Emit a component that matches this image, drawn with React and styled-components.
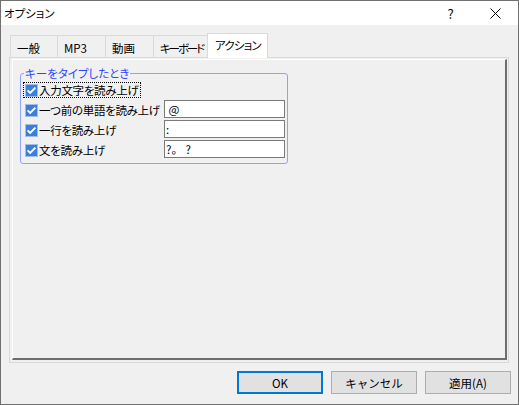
import styled, { createGlobalStyle } from "styled-components";

const GlobalStyle = createGlobalStyle`
  html, body {
    margin: 0;
    padding: 0;
    background: #ffffff;
  }
  body {
    font-family: "Noto Sans CJK JP", "Noto Sans", sans-serif;
    font-size: 11.5px;
    font-feature-settings: "palt";
    color: #000;
  }
  * {
    box-sizing: border-box;
  }
`;

const Window = styled.div`
  width: 519px;
  height: 405px;
  border: 1px solid #707070;
  display: flex;
  flex-direction: column;
  background: #f0f0f0;
`;

const TitleBar = styled.div`
  height: 24px;
  background: #ffffff;
  display: flex;
  align-items: center;
  padding-left: 3px;
  .title {
    flex: 1;
    line-height: 24px;
  }
`;

const CaptionButton = styled.div`
  width: 46px;
  height: 24px;
  display: flex;
  align-items: center;
  justify-content: center;
  font-size: 13px;
  padding-left: ${(p) => (p.$help ? 3 : 0)}px;
`;

const Body = styled.div`
  flex: 1;
  display: flex;
  flex-direction: column;
  padding: 8px 9px 10px 8px;
`;

const TabStrip = styled.div`
  height: 25px;
  display: flex;
  align-items: flex-end;
  padding-left: 1px;
  margin-bottom: -1px;
  position: relative;
  z-index: 1;
`;

const Tab = styled.div`
  width: ${(p) => p.$w}px;
  height: ${(p) => (p.$active ? 25 : 23)}px;
  margin-left: ${(p) => (p.$first ? 0 : -1)}px;
  border: 1px solid #d9d9d9;
  border-bottom: none;
  background: ${(p) => (p.$active ? "#ffffff" : "transparent")};
  padding: ${(p) => (p.$active ? "3px 0 0 7px" : "4px 0 0 6px")};
  line-height: 16px;
  letter-spacing: ${(p) => p.$ls || 0}px;
  white-space: nowrap;
  overflow: hidden;
`;

const Panel = styled.div`
  flex: 1;
  border: 1px solid #d9d9d9;
  padding: 1px 1px 2px 2px;
  display: flex;
`;

const Page = styled.div`
  flex: 1;
  border-top: 1px solid #ffffff;
  border-left: 1px solid #ffffff;
  border-right: 2px solid #6d6d6d;
  border-bottom: 2px solid #6d6d6d;
  background: #f0f0f0;
`;

const Group = styled.fieldset`
  width: 268px;
  margin: 6px 0 0 7px;
  padding: 0 2px 3px 2px;
  border: 1px solid #8da3f8;
  border-radius: 3px;
  display: grid;
  grid-template-columns: 141px 121px;
  grid-auto-rows: 20px;
  legend {
    margin-left: 1px;
    padding: 0 1px;
    line-height: 14px;
    color: #2a47ff;
  }
`;

const CheckLabel = styled.label`
  grid-column: 1;
  justify-self: start;
  align-self: center;
  height: 16px;
  display: inline-flex;
  align-items: center;
  gap: 1px;
  padding: 0 1px;
  border: 1px dotted ${(p) => (p.$focused ? "#000" : "transparent")};
  letter-spacing: -0.3px;
  white-space: nowrap;
`;

const TextBox = styled.input`
  grid-column: 2;
  align-self: start;
  width: 121px;
  height: 18px;
  margin: 0;
  border: 1px solid #7a7a7a;
  background: #ffffff;
  padding: 0 1px;
  font-family: inherit;
  font-size: 11.5px;
  font-feature-settings: normal;
  color: #000;
  outline: none;
`;

const ButtonRow = styled.div`
  display: flex;
  justify-content: flex-end;
  gap: 8px;
  margin-top: 8px;
  margin-right: -2px;
`;

const Button = styled.button`
  width: 86px;
  height: 23px;
  margin: 0;
  background: #e1e1e1;
  border: ${(p) => (p.$default ? "2px solid #0078d7" : "1px solid #adadad")};
  font-family: inherit;
  font-size: 11.5px;
  color: #000;
  padding: 0;
`;

const CheckIcon = () => (
  <svg width="13" height="13" viewBox="0 0 13 13">
    <rect x="0.5" y="0.5" width="12" height="12" fill="#3c7fda" stroke="#a3bde4" />
    <path d="M2.6 6.4 L5.2 9 L10.4 3.6" fill="none" stroke="#ffffff" strokeWidth="1.9" />
  </svg>
);

const CloseIcon = () => (
  <svg width="11" height="11" viewBox="0 0 11 11">
    <path d="M0.5 0.5 L10.5 10.5 M10.5 0.5 L0.5 10.5" stroke="#000" strokeWidth="1" />
  </svg>
);

const tabs = [
  { label: "一般", w: 48 },
  { label: "MP3", w: 49 },
  { label: "動画", w: 49 },
  { label: "キーボード", w: 55, ls: -2.1 },
  { label: "アクション", w: 61, ls: -0.8, active: true },
];

const rows = [
  { label: "入力文字を読み上げ", focused: true },
  { label: "一つ前の単語を読み上げ", value: " @" },
  { label: "一行を読み上げ", value: ":" },
  { label: "文を読み上げ", value: "?。 ?" },
];

export default function App() {
  return (
    <>
      <GlobalStyle />
      <Window>
        <TitleBar>
          <span className="title">オプション</span>
          <CaptionButton $help>?</CaptionButton>
          <CaptionButton>
            <CloseIcon />
          </CaptionButton>
        </TitleBar>
        <Body>
          <TabStrip>
            {tabs.map((t, i) => (
              <Tab
                key={t.label}
                $w={t.w}
                $first={i === 0}
                $active={t.active}
                $ls={t.ls}
              >
                {t.label}
              </Tab>
            ))}
          </TabStrip>
          <Panel>
            <Page>
              <Group>
                <legend>キーをタイプしたとき</legend>
                {rows.map((r) => [
                  <CheckLabel key={r.label} $focused={r.focused}>
                    <CheckIcon />
                    {r.label}
                  </CheckLabel>,
                  r.value !== undefined && (
                    <TextBox key={r.label + "-box"} readOnly defaultValue={r.value} />
                  ),
                ])}
              </Group>
            </Page>
          </Panel>
          <ButtonRow>
            <Button $default>OK</Button>
            <Button>キャンセル</Button>
            <Button>適用(A)</Button>
          </ButtonRow>
        </Body>
      </Window>
    </>
  );
}
